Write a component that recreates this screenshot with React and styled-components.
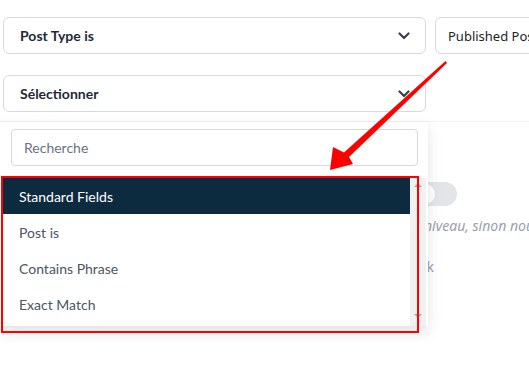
import React from "react";
import styled, { createGlobalStyle } from "styled-components";

const Global = createGlobalStyle`
  html, body { margin: 0; padding: 0; background: #ffffff; }
  body { font-family: Lato, "Noto Sans", sans-serif; }
  * { box-sizing: border-box; }
`;

const Page = styled.div`
  position: relative;
  width: 529px;
  height: 376px;
  overflow: hidden;
  background: #fff;
  padding-top: 17px;
`;

const Row = styled.div`
  display: flex;
  gap: 9px;
  padding-left: 3px;
  margin-bottom: ${(p) => p.$mb || 0}px;
`;

const Select = styled.div`
  flex: 0 0 ${(p) => p.$w}px;
  height: 37px;
  border: 1px solid #d7d9de;
  border-radius: 6px;
  display: flex;
  align-items: center;
  justify-content: space-between;
  padding: 0 15px 0 16px;
  font-size: 14px;
  font-weight: 700;
  color: #1f2937;
  background: #fff;
`;

const NativeSelect = styled.div`
  flex: 0 0 140px;
  height: 37px;
  border: 1px solid #d7d9de;
  border-radius: 6px;
  display: flex;
  align-items: center;
  padding-left: 12px;
  font-family: "Noto Sans", sans-serif;
  font-size: 13px;
  color: #1d2327;
  white-space: nowrap;
  overflow: hidden;
`;

const Chevron = () => (
  <svg width="12" height="8" viewBox="0 0 12 8">
    <path d="M1.5 1.5 L6 6 L10.5 1.5" fill="none" stroke="#374151" strokeWidth="2.2" strokeLinecap="round" strokeLinejoin="round" />
  </svg>
);

const Settings = styled.div`
  margin-top: 9px;
  border-top: 1px solid #f1f2f4;
  padding-top: 60px;
  padding-left: 413px;
`;

const Toggle = styled.div`
  position: relative;
  width: 44px;
  height: 24px;
  border-radius: 12px;
  background: #e3e5e9;
  display: flex;
  align-items: center;
  padding-left: 2px;
`;

const Knob = styled.span`
  width: 20px;
  height: 20px;
  border-radius: 50%;
  background: #fff;
`;

const Hint = styled.div`
  margin-top: 10px;
  margin-left: 11px;
  font-family: "Noto Sans", sans-serif;
  font-style: italic;
  font-size: 14px;
  color: #9aa1ad;
  white-space: nowrap;
`;

const Label = styled.div`
  margin-top: 22px;
  margin-left: -200px;
  width: 221px;
  text-align: right;
  font-family: "Noto Sans", sans-serif;
  font-size: 14px;
  color: #9aa1ad;
`;

const Dropdown = styled.div`
  position: absolute;
  left: 0;
  top: 122px;
  width: 428px;
  background: #fff;
  box-shadow: 0 6px 14px rgba(0, 0, 0, 0.1), 0 0 3px rgba(0, 0, 0, 0.04);
  padding: 7px 10px 0 3px;
  z-index: 2;
`;

const Search = styled.div`
  margin-left: 8px;
  height: 37px;
  border: 1px solid #d7d9de;
  border-radius: 4px;
  display: flex;
  align-items: center;
  padding-left: 12px;
  font-size: 14px;
  color: #6b7280;
`;

const ListWrap = styled.div`
  margin-top: 12px;
  margin-right: -8px;
  height: 149px;
  display: flex;
  border-bottom: 1px solid #e6e6e6;
`;

const List = styled.div`
  flex: 1;
`;

const Item = styled.div`
  height: 36px;
  display: flex;
  align-items: center;
  padding-left: 16px;
  font-size: 14px;
  color: ${(p) => (p.$active ? "#ffffff" : "#4b5563")};
  background: ${(p) => (p.$active ? "#0d2b3f" : "transparent")};
`;

const Track = styled.div`
  width: 16px;
  background: #f1f1f1;
  display: flex;
  flex-direction: column;
  justify-content: space-between;
  align-items: center;
  padding: 5px 0 8px;
`;

const Tri = styled.span`
  width: 0;
  height: 0;
  border-left: 4px solid transparent;
  border-right: 4px solid transparent;
  ${(p) =>
    p.$up
      ? "border-bottom: 4px solid #a3a3a3;"
      : "border-top: 4px solid #a3a3a3;"}
`;

const RedBox = styled.div`
  position: absolute;
  left: 1px;
  top: 176px;
  width: 418px;
  height: 157px;
  border: 2px solid #ff0000;
  z-index: 3;
  pointer-events: none;
`;

const ArrowSvg = styled.svg`
  position: absolute;
  left: 0;
  top: 0;
  z-index: 4;
  pointer-events: none;
`;

export default function App() {
  return (
    <>
      <Global />
      <Page>
        <Row $mb={21}>
          <Select $w={423}>
            <span>Post Type is</span>
            <Chevron />
          </Select>
          <NativeSelect>Published Posts</NativeSelect>
        </Row>
        <Row>
          <Select $w={423}>
            <span>Sélectionner</span>
            <Chevron />
          </Select>
        </Row>
        <Settings>
          <Toggle>
            <Knob />
          </Toggle>
          <Hint>niveau, sinon nous afficherons tout</Hint>
          <Label>Fallback</Label>
        </Settings>

        <Dropdown>
          <Search>Recherche</Search>
          <ListWrap>
            <List>
              <Item $active>Standard Fields</Item>
              <Item>Post is</Item>
              <Item>Contains Phrase</Item>
              <Item>Exact Match</Item>
            </List>
            <Track>
              <Tri $up />
              <Tri />
            </Track>
          </ListWrap>
        </Dropdown>

        <RedBox />
        <ArrowSvg width="529" height="376" viewBox="0 0 529 376">
          <polygon
            points="445.5,61 447,63 349,157 353,164 330,170 333,147 344,152.5"
            fill="#ff0000"
          />
        </ArrowSvg>
      </Page>
    </>
  );
}
